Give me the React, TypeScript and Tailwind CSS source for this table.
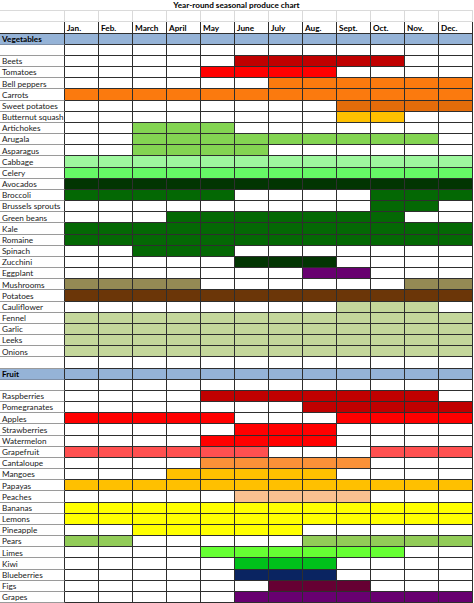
import React from 'react'

type Span = [string, number, number]
type Row =
  | { kind: 'title' }
  | { kind: 'gap' }
  | { kind: 'header' }
  | { kind: 'section'; name: string }
  | { kind: 'blank' }
  | { kind: 'item'; name: string; spans: Span[] }

const fills: Record<string, string> = {
  dred: 'bg-[#c00000]',
  red: 'bg-[#ff0000]',
  orange: 'bg-[#fb7a0e]',
  dorange: 'bg-[#e46c0a]',
  amber: 'bg-[#ffc000]',
  lgreen: 'bg-[#83d452]',
  mint: 'bg-[#9ef79e]',
  bgreen: 'bg-[#66f866]',
  vdgreen: 'bg-[#023502]',
  dgreen: 'bg-[#046804]',
  purple: 'bg-[#680070]',
  khaki: 'bg-[#948a54]',
  brown: 'bg-[#6b3608]',
  pale: 'bg-[#c4d79b]',
  salmon: 'bg-[#ff5050]',
  lorange: 'bg-[#fa9138]',
  peach: 'bg-[#fac090]',
  yellow: 'bg-[#ffff00]',
  pear: 'bg-[#92cc58]',
  lime: 'bg-[#66ff33]',
  kiwi: 'bg-[#00c01a]',
  navy: 'bg-[#0a2461]',
  fig: 'bg-[#660033]',
}

const months = ['Jan.', 'Feb.', 'March', 'April', 'May', 'June', 'July', 'Aug.', 'Sept.', 'Oct.', 'Nov.', 'Dec.']

const all = (c: string): Span[] => [[c, 0, 11]]

const rows: Row[] = [
  { kind: 'title' },
  { kind: 'gap' },
  { kind: 'header' },
  { kind: 'section', name: 'Vegetables' },
  { kind: 'blank' },
  { kind: 'item', name: 'Beets', spans: [['dred', 5, 9]] },
  { kind: 'item', name: 'Tomatoes', spans: [['red', 4, 7]] },
  { kind: 'item', name: 'Bell peppers', spans: [['orange', 6, 11]] },
  { kind: 'item', name: 'Carrots', spans: all('orange') },
  { kind: 'item', name: 'Sweet potatoes', spans: [['dorange', 8, 11]] },
  { kind: 'item', name: 'Butternut squash', spans: [['amber', 8, 9]] },
  { kind: 'item', name: 'Artichokes', spans: [['lgreen', 2, 4]] },
  { kind: 'item', name: 'Arugala', spans: [['lgreen', 2, 10]] },
  { kind: 'item', name: 'Asparagus', spans: [['lgreen', 2, 5]] },
  { kind: 'item', name: 'Cabbage', spans: all('mint') },
  { kind: 'item', name: 'Celery', spans: all('bgreen') },
  { kind: 'item', name: 'Avocados', spans: all('vdgreen') },
  { kind: 'item', name: 'Broccoli', spans: [['dgreen', 0, 4], ['dgreen', 9, 11]] },
  { kind: 'item', name: 'Brussels sprouts', spans: [['dgreen', 9, 10]] },
  { kind: 'item', name: 'Green beans', spans: [['dgreen', 3, 9]] },
  { kind: 'item', name: 'Kale', spans: all('dgreen') },
  { kind: 'item', name: 'Romaine', spans: all('dgreen') },
  { kind: 'item', name: 'Spinach', spans: [['dgreen', 2, 4]] },
  { kind: 'item', name: 'Zucchini', spans: [['vdgreen', 5, 7]] },
  { kind: 'item', name: 'Eggplant', spans: [['purple', 7, 8]] },
  { kind: 'item', name: 'Mushrooms', spans: [['khaki', 0, 3], ['khaki', 10, 11]] },
  { kind: 'item', name: 'Potatoes', spans: all('brown') },
  { kind: 'item', name: 'Cauliflower', spans: [['pale', 8, 10]] },
  { kind: 'item', name: 'Fennel', spans: all('pale') },
  { kind: 'item', name: 'Garlic', spans: all('pale') },
  { kind: 'item', name: 'Leeks', spans: all('pale') },
  { kind: 'item', name: 'Onions', spans: all('pale') },
  { kind: 'blank' },
  { kind: 'section', name: 'Fruit' },
  { kind: 'blank' },
  { kind: 'item', name: 'Raspberries', spans: [['dred', 4, 10]] },
  { kind: 'item', name: 'Pomegranates', spans: [['dred', 7, 11]] },
  { kind: 'item', name: 'Apples', spans: [['red', 0, 4], ['red', 8, 11]] },
  { kind: 'item', name: 'Strawberries', spans: [['red', 5, 7]] },
  { kind: 'item', name: 'Watermelon', spans: [['red', 4, 7]] },
  { kind: 'item', name: 'Grapefruit', spans: [['salmon', 0, 5], ['salmon', 9, 11]] },
  { kind: 'item', name: 'Cantaloupe', spans: [['lorange', 4, 8]] },
  { kind: 'item', name: 'Mangoes', spans: [['amber', 3, 7]] },
  { kind: 'item', name: 'Papayas', spans: all('amber') },
  { kind: 'item', name: 'Peaches', spans: [['peach', 5, 8]] },
  { kind: 'item', name: 'Bananas', spans: all('yellow') },
  { kind: 'item', name: 'Lemons', spans: all('yellow') },
  { kind: 'item', name: 'Pineapple', spans: [['yellow', 2, 6]] },
  { kind: 'item', name: 'Pears', spans: [['pear', 0, 1], ['pear', 7, 11]] },
  { kind: 'item', name: 'Limes', spans: [['lime', 4, 9]] },
  { kind: 'item', name: 'Kiwi', spans: [['kiwi', 5, 7]] },
  { kind: 'item', name: 'Blueberries', spans: [['navy', 5, 7]] },
  { kind: 'item', name: 'Figs', spans: [['fig', 6, 8]] },
  { kind: 'item', name: 'Grapes', spans: [['purple', 5, 11]] },
]

function fillFor(spans: Span[], m: number) {
  const hit = spans.find(([, a, b]) => m >= a && m <= b)
  return hit ? fills[hit[0]] : 'bg-white'
}

function SheetRow({ row }: { row: Row }) {
  if (row.kind === 'title') {
    return (
      <div className="col-span-13 flex items-center justify-center border-b border-[#dadada] text-[8.2px] font-bold leading-none whitespace-nowrap">
        Year-round seasonal produce chart
      </div>
    )
  }

  if (row.kind === 'gap') {
    return (
      <>
        <div className="border-r border-b border-[#dadada]" />
        {months.map((m) => (
          <div key={m} className="border-r border-b border-[#dadada]" />
        ))}
      </>
    )
  }

  if (row.kind === 'header') {
    return (
      <>
        <div className="border-r border-b border-[#2e2e2e]" />
        {months.map((m) => (
          <div
            key={m}
            className="flex items-center overflow-hidden whitespace-nowrap border-r border-b border-[#2e2e2e] pl-[2px] pt-px text-[8.2px] font-bold leading-none"
          >
            {m}
          </div>
        ))}
      </>
    )
  }

  if (row.kind === 'section') {
    return (
      <>
        <div className="flex items-center whitespace-nowrap border-r border-b border-r-[#2e2e2e] border-b-[#7f8fa6] bg-[#95b3d7] pl-[2px] pt-px text-[8.2px] font-bold leading-none">
          {row.name}
        </div>
        {months.map((m) => (
          <div key={m} className="border-r border-b border-[#2e2e2e] bg-[#95b3d7]" />
        ))}
      </>
    )
  }

  const spans = row.kind === 'item' ? row.spans : []
  return (
    <>
      <div className="flex items-center overflow-hidden whitespace-nowrap border-r border-b border-r-[#2e2e2e] border-b-[#9a9a9a] pl-[2px] pt-px text-[8.2px] leading-none text-[#1a1a1a]">
        {row.kind === 'item' ? row.name : ''}
      </div>
      {months.map((m, i) => (
        <div key={m} className={`border-r border-b border-[#2e2e2e] ${fillFor(spans, i)}`} />
      ))}
    </>
  )
}

export default function App() {
  return (
    <div className="h-[603px] w-[474px] overflow-hidden bg-white font-['Lato','Liberation_Sans',sans-serif] text-black">
      <div className="grid h-[603px] grid-cols-[65px_repeat(12,34px)] grid-rows-[repeat(54,minmax(0,1fr))]">
        {rows.map((row, i) => (
          <SheetRow key={i} row={row} />
        ))}
      </div>
    </div>
  )
}
